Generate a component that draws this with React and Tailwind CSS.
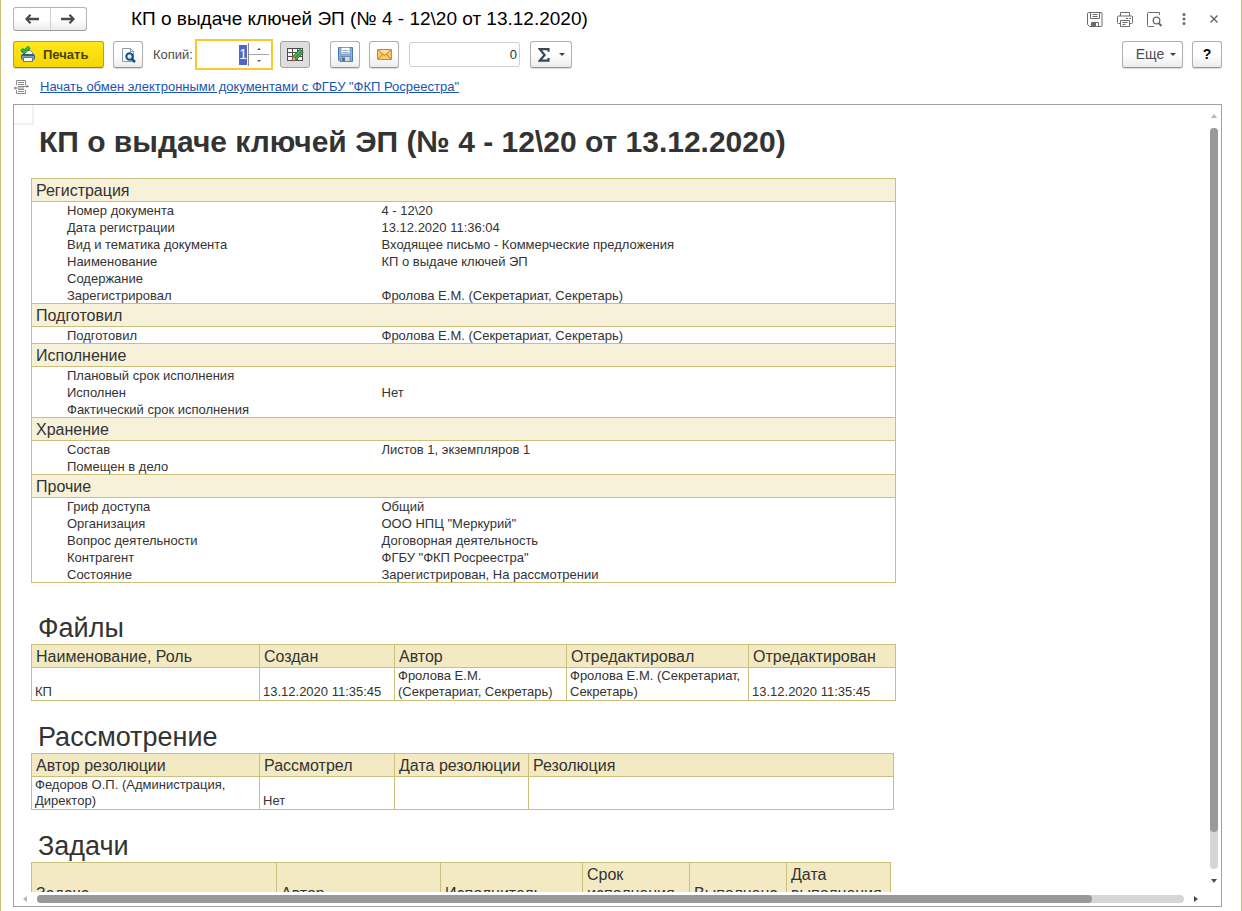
import { useEffect, useRef } from "react";

const details = [
  {
    title: "Регистрация",
    rows: [
      ["Номер документа", "4 - 12\\20"],
      ["Дата регистрации", "13.12.2020 11:36:04"],
      ["Вид и тематика документа", "Входящее письмо - Коммерческие предложения"],
      ["Наименование", "КП о выдаче ключей ЭП"],
      ["Содержание", ""],
      ["Зарегистрировал", "Фролова Е.М. (Секретариат, Секретарь)"],
    ],
  },
  {
    title: "Подготовил",
    rows: [["Подготовил", "Фролова Е.М. (Секретариат, Секретарь)"]],
  },
  {
    title: "Исполнение",
    rows: [
      ["Плановый срок исполнения", ""],
      ["Исполнен", "Нет"],
      ["Фактический срок исполнения", ""],
    ],
  },
  {
    title: "Хранение",
    rows: [
      ["Состав", "Листов 1, экземпляров 1"],
      ["Помещен в дело", ""],
    ],
  },
  {
    title: "Прочие",
    rows: [
      ["Гриф доступа", "Общий"],
      ["Организация", 'ООО НПЦ "Меркурий"'],
      ["Вопрос деятельности", "Договорная деятельность"],
      ["Контрагент", 'ФГБУ "ФКП Росреестра"'],
      ["Состояние", "Зарегистрирован, На рассмотрении"],
    ],
  },
];

const files = {
  title: "Файлы",
  width: "w-[865px]",
  columns: [
    ["Наименование, Роль", "w-[228px]"],
    ["Создан", "w-[135px]"],
    ["Автор", "w-[172px]"],
    ["Отредактировал", "w-[182px]"],
    ["Отредактирован", "w-[147px]"],
  ],
  rows: [
    [
      "КП",
      "13.12.2020 11:35:45",
      "Фролова Е.М. (Секретариат, Секретарь)",
      "Фролова Е.М. (Секретариат, Секретарь)",
      "13.12.2020 11:35:45",
    ],
  ],
};

const review = {
  title: "Рассмотрение",
  width: "w-[863px]",
  columns: [
    ["Автор резолюции", "w-[228px]"],
    ["Рассмотрел", "w-[135px]"],
    ["Дата резолюции", "w-[134px]"],
    ["Резолюция", "w-[365px]"],
  ],
  rows: [["Федоров О.П. (Администрация, Директор)", "Нет", "", ""]],
};

const tasks = {
  title: "Задачи",
  width: "w-[860px]",
  columns: [
    ["Задача", "w-[245px]"],
    ["Автор", "w-[164px]"],
    ["Исполнитель", "w-[142px]"],
    ["Срок исполнения", "w-[107px]"],
    ["Выполнена", "w-[97px]"],
    ["Дата выполнения", "w-[104px]"],
  ],
  rows: [],
};

const buttonBase =
  "flex h-[27px] shrink-0 items-center justify-center rounded-[3px] border border-[#b0b0b0] border-b-[#949494] bg-linear-to-b from-white from-50% to-[#ececec] shadow-[0_1px_1px_rgba(0,0,0,0.15)]";

const ArrowIcon = ({ flip }) => (
  <svg width="14" height="10" viewBox="0 0 14 10" className={flip ? "rotate-180" : ""} aria-hidden>
    <path d="M2 5H14" stroke="#4a4a4a" strokeWidth="2.4" />
    <path d="M5.5 0.8L1.5 5L5.5 9.2" fill="none" stroke="#4a4a4a" strokeWidth="2.2" />
  </svg>
);

const PrinterColorIcon = () => (
  <svg width="16" height="17" viewBox="0 0 16 17" aria-hidden>
    <path d="M4.5 9V4.5H10.5L12.5 6.5V9" fill="#fff" stroke="#7b7f6a" />
    <rect x="1.5" y="8.5" width="13" height="5" rx="1" fill="#7fa3c7" stroke="#3a5a7c" />
    <path d="M2 9.5H14" stroke="#3a5a7c" />
    <rect x="3.5" y="11.5" width="9" height="4" fill="#fff" stroke="#5b7ea3" />
    <path d="M1.5 3.2L4.3 6L9.3 1.2" fill="none" stroke="#157220" strokeWidth="3.6" />
    <path d="M1.5 3.2L4.3 6L9.3 1.2" fill="none" stroke="#2ccb3d" strokeWidth="1.9" />
  </svg>
);

const PreviewIcon = () => (
  <svg width="15" height="16" viewBox="0 0 15 16" aria-hidden>
    <path d="M1.5 14.5V1.5H9.5L12.5 4.5V14.5Z" fill="#fff" stroke="#8a9aa8" />
    <path d="M9.5 1.5V4.5H12.5" fill="none" stroke="#8a9aa8" />
    <circle cx="8.5" cy="9.5" r="3.2" fill="#dbeaf6" stroke="#11507f" strokeWidth="2" />
    <path d="M10.8 12L14 15" stroke="#11507f" strokeWidth="2.4" />
  </svg>
);

const EditTableIcon = () => (
  <svg width="17" height="16" viewBox="0 0 17 16" aria-hidden>
    <rect x="0.5" y="1.5" width="15" height="12" fill="#fff" stroke="#4c4c4c" />
    <path d="M0 5.5H16M0 9.5H16M5.5 1V14M10.5 1V14" stroke="#4c4c4c" />
    <path d="M6 9.2L12.2 2.8Q13 2 14 3L15.6 4.6Q16.4 5.6 15.6 6.4L9.4 12.6Z" fill="#54b35c" stroke="#28652d" />
    <path d="M8 11L14.5 4.6" stroke="#3a8a42" strokeWidth="1.4" />
    <path d="M5 14L6 9.2L9.4 12.6Z" fill="#efae9a" stroke="#a54740" strokeWidth="0.9" />
  </svg>
);

const DisketteIcon = () => (
  <svg width="15" height="15" viewBox="0 0 15 15" aria-hidden>
    <path d="M0.5 0.5H14.5V14.5H2L0.5 13Z" fill="#86b0de" stroke="#4a78ab" />
    <rect x="3" y="0.5" width="9" height="6.5" fill="#fff" stroke="#6f94bd" strokeWidth="0.8" />
    <path d="M4.5 3.5H10.5M4.5 5.5H10.5" stroke="#8fa5bb" />
    <rect x="3" y="9.5" width="9" height="5" fill="#d3dbe2" stroke="#5b7ea5" strokeWidth="0.8" />
    <rect x="4" y="10.5" width="3" height="3.5" fill="#4b6f96" />
  </svg>
);

const EnvelopeIcon = () => (
  <svg width="15" height="11" viewBox="0 0 15 11" aria-hidden>
    <rect x="0.5" y="0.5" width="14" height="10" rx="0.5" fill="#f8c869" stroke="#cc8726" />
    <path d="M2 1.2H13L7.5 5.8Z" fill="#fde0a0" />
    <path d="M1 1L7.5 6.5L14 1M1 10L5.8 5.2M14 10L9.2 5.2" fill="none" stroke="#c07c22" strokeWidth="0.9" />
  </svg>
);

const SigmaIcon = () => (
  <svg width="12" height="14" viewBox="0 0 12 14" aria-hidden>
    <path d="M10.5 3.8V1.2H1.8L6.6 7L1.8 12.6H10.5V10" fill="none" stroke="#34495a" strokeWidth="2.2" />
  </svg>
);

const CaretDown = () => (
  <svg width="6" height="3" viewBox="0 0 6 3" aria-hidden>
    <path d="M0 0H6L3 3Z" fill="#444" />
  </svg>
);

const SaveIcon = () => (
  <svg width="16" height="15" viewBox="0 0 16 15" fill="none" stroke="#6b6b6b" aria-hidden>
    <path d="M0.5 1.5Q0.5 0.5 1.5 0.5H14Q15 0.5 15 1.5V13.5Q15 14.5 14 14.5H2.5L0.5 12.5Z" />
    <path d="M3.5 0.5V6.5H12.5V0.5M5.5 2.5H10.5M5.5 4.5H10.5M4.5 14V10.5H11.5V14" />
    <rect x="5" y="11" width="4" height="3" fill="#6b6b6b" stroke="none" />
  </svg>
);

const PrinterIcon = () => (
  <svg width="16" height="15" viewBox="0 0 16 15" fill="none" stroke="#6b6b6b" aria-hidden>
    <path d="M3.5 4V0.5H12.5V4" />
    <path d="M3.5 11.5H1.5Q0.5 11.5 0.5 10.5V5Q0.5 4 1.5 4H14.5Q15.5 4 15.5 5V10.5Q15.5 11.5 14.5 11.5H12.5" />
    <path d="M3.5 8.5H12.5V14.5H3.5ZM5.5 10.5H10.5M5.5 12.5H8.5M9 6.5H11M12 6.5H14" />
  </svg>
);

const PagePreviewIcon = () => (
  <svg width="15" height="15" viewBox="0 0 15 15" fill="none" stroke="#6b6b6b" aria-hidden>
    <path d="M12.5 3V0.5H1.5Q0.5 0.5 0.5 1.5V13.5Q0.5 14.5 1.5 14.5H7" />
    <circle cx="9.5" cy="8.5" r="3.3" strokeWidth="1.3" />
    <path d="M11.5 11L14.5 14" strokeWidth="2" />
  </svg>
);

const ExchangeIcon = () => (
  <svg width="16" height="15" viewBox="0 0 16 15" fill="none" stroke="#8c8c8c" aria-hidden>
    <path d="M3.5 5V0.5H12.5V5M5 2.5H11M5 4.5H11" />
    <path d="M3.5 10V13.5H12.5V10M5 9.5H11M5 11.5H11" />
    <path d="M16 6.5H5M11 8H1" />
    <path d="M14.5 4.5V8L12 6.5Z M1.5 6.5V10L4 8Z" fill="#8c8c8c" stroke="none" />
  </svg>
);

const ScrollArrow = ({ points, fill }) => (
  <svg width="6" height="6" viewBox="0 0 6 6" className="shrink-0" aria-hidden>
    <polygon points={points} fill={fill} />
  </svg>
);

const TitleBar = () => (
  <header className="flex h-6 items-center">
    <div className="flex h-6 w-[74px] shrink-0 overflow-hidden rounded-[3px] border border-[#b4b4b4] border-b-[#9a9a9a] bg-linear-to-b from-white from-50% to-[#ececec]">
      <button type="button" aria-label="Назад" className="flex flex-1 items-center justify-center border-r border-[#cfcfcf]">
        <ArrowIcon />
      </button>
      <button type="button" aria-label="Вперед" className="flex flex-1 items-center justify-center">
        <ArrowIcon flip />
      </button>
    </div>
    <h1 className="ml-11 flex-1 truncate text-[19px] leading-6 text-black">
      КП о выдаче ключей ЭП (№ 4 - 12\20 от 13.12.2020)
    </h1>
    <div className="flex items-center gap-[14px]">
      <button type="button" aria-label="Сохранить"><SaveIcon /></button>
      <button type="button" aria-label="Печать"><PrinterIcon /></button>
      <button type="button" aria-label="Просмотр"><PagePreviewIcon /></button>
      <button type="button" aria-label="Меню" className="flex w-4 justify-center">
        <svg width="4" height="12" viewBox="0 0 4 12" fill="#6b6b6b" aria-hidden>
          <circle cx="2" cy="1.6" r="1.5" />
          <circle cx="2" cy="6" r="1.5" />
          <circle cx="2" cy="10.4" r="1.5" />
        </svg>
      </button>
      <button type="button" aria-label="Закрыть" className="flex w-4 justify-center">
        <svg width="8" height="8" viewBox="0 0 8 8" stroke="#5c5c5c" strokeWidth="1.2" aria-hidden>
          <path d="M0.5 0.5L7.5 7.5M7.5 0.5L0.5 7.5" />
        </svg>
      </button>
    </div>
  </header>
);

const Toolbar = () => {
  const copiesRef = useRef(null);

  useEffect(() => {
    copiesRef.current.focus();
    copiesRef.current.select();
  }, []);

  return (
    <div className="mt-2 flex h-[31px] items-center">
      <button
        type="button"
        className="flex h-[27px] w-[91px] shrink-0 items-center gap-[7px] rounded-[3px] border border-[#c2a200] border-b-[#9a8000] bg-linear-to-b from-[#ffe81a] to-[#f6d500] pl-[6px] text-[13px] font-bold text-[#4a4000] shadow-[0_1px_1px_rgba(0,0,0,0.15)]"
      >
        <PrinterColorIcon />
        Печать
      </button>
      <button type="button" aria-label="Предварительный просмотр" className={`${buttonBase} ml-[9px] w-[30px]`}>
        <PreviewIcon />
      </button>
      <label htmlFor="copies" className="ml-[10px] w-[42px] text-[13px] text-[#4d4d4d]">
        Копий:
      </label>
      <div className="flex h-[31px] w-[78px] shrink-0 items-center border-2 border-[#f9c82a] bg-white pr-[2px]">
        <input
          id="copies"
          ref={copiesRef}
          type="text"
          inputMode="numeric"
          defaultValue="1"
          className="h-5 min-w-0 flex-1 pr-px text-right text-[14px] text-black outline-none selection:bg-[#5068c4] selection:text-white"
        />
        <div className="flex h-[23px] w-[21px] flex-col border-l border-[#8c8c8c]">
          <button type="button" aria-label="Больше" className="flex flex-1 items-center justify-center border-b border-[#a8a8a8]">
            <svg width="4" height="2" viewBox="0 0 4 2" aria-hidden><path d="M0 2H4L2 0Z" fill="#555" /></svg>
          </button>
          <button type="button" aria-label="Меньше" className="flex flex-1 items-center justify-center">
            <svg width="4" height="2" viewBox="0 0 4 2" aria-hidden><path d="M0 0H4L2 2Z" fill="#555" /></svg>
          </button>
        </div>
      </div>
      <button
        type="button"
        aria-label="Редактирование"
        aria-pressed="true"
        className="ml-[7px] flex h-[27px] w-[30px] shrink-0 items-center justify-center rounded-[3px] border border-[#a3a3a3] bg-[#dedede]"
      >
        <EditTableIcon />
      </button>
      <button type="button" aria-label="Сохранить в файл" className={`${buttonBase} ml-5 w-[30px]`}>
        <DisketteIcon />
      </button>
      <button type="button" aria-label="Отправить" className={`${buttonBase} ml-[9px] w-[30px]`}>
        <EnvelopeIcon />
      </button>
      <input
        type="text"
        aria-label="Сумма"
        readOnly
        value="0"
        className="ml-[10px] h-[25px] w-[111px] shrink-0 rounded-[3px] border border-[#cfcfcf] px-[2px] text-right text-[13px] text-[#333] outline-none"
      />
      <button type="button" aria-label="Итоги" className={`${buttonBase} ml-[10px] w-[42px] gap-[9px]`}>
        <SigmaIcon />
        <CaretDown />
      </button>
      <button type="button" className={`${buttonBase} ml-auto w-[61px] gap-[6px] pl-[7px] text-[14px] text-[#4d4d4d]`}>
        Еще
        <CaretDown />
      </button>
      <button type="button" aria-label="Справка" className={`${buttonBase} ml-[9px] w-[30px] text-[14px] font-bold text-black`}>
        ?
      </button>
    </div>
  );
};

const DetailsTable = () => (
  <table className="w-[865px] table-fixed border-collapse border border-[#cbbf7c] text-left text-[13px] leading-[14px] text-[#333]">
    <colgroup>
      <col className="w-[350px]" />
      <col />
    </colgroup>
    {details.map((section) => (
      <tbody key={section.title}>
        <tr>
          <th
            colSpan={2}
            scope="rowgroup"
            className="h-[23px] border border-[#cbbf7c] bg-[#f7f1da] px-1 pb-0 pt-[2px] text-[16px] font-normal leading-5"
          >
            {section.title}
          </th>
        </tr>
        {section.rows.map(([name, value]) => (
          <tr key={name}>
            <td className="h-[17px] pb-0 pl-[35px] pt-[2px]">{name}</td>
            <td className="h-[17px] px-0 pb-0 pt-[2px]">{value}</td>
          </tr>
        ))}
      </tbody>
    ))}
  </table>
);

const ReportTable = ({ title, width, columns, rows }) => (
  <section>
    <h3 className="pl-[7px] pt-[2px] text-[27px] leading-8 text-[#333]">{title}</h3>
    <table className={`${width} table-fixed border-collapse text-left text-[13px] leading-4 text-[#333]`}>
      <thead>
        <tr>
          {columns.map(([name, columnWidth]) => (
            <th
              key={name}
              scope="col"
              className={`${columnWidth} border border-[#cbbf7c] bg-[#f3eac4] pb-px pl-1 pt-[2px] align-bottom text-[16px] font-normal leading-[19px]`}
            >
              {name}
            </th>
          ))}
        </tr>
      </thead>
      <tbody>
        {rows.map((row, i) => (
          <tr key={i}>
            {row.map((cell, j) => (
              <td key={j} className="h-[33px] border border-[#cbbf7c] py-0 pl-[3px] align-bottom">
                {cell}
              </td>
            ))}
          </tr>
        ))}
      </tbody>
    </table>
  </section>
);

export default function App() {
  return (
    <div className="flex h-screen flex-col border-x border-[#cdbf77] bg-white pb-1 pl-3 pr-[19px] pt-[7px] font-['Liberation_Sans',Arial,sans-serif]">
      <TitleBar />
      <Toolbar />
      <div className="mt-2 flex h-[18px] items-center gap-[11px]">
        <ExchangeIcon />
        <a href="#exchange" className="text-[13px] leading-[18px] text-[#1a55b0] underline">
          Начать обмен электронными документами с ФГБУ "ФКП Росреестра"
        </a>
      </div>

      <main className="mt-2 grid min-h-0 flex-1 grid-cols-[minmax(0,1fr)_14px] grid-rows-[minmax(0,1fr)_14px] border border-[#a0a0a0]">
        <div className="overflow-auto [scrollbar-width:none]">
          <div className="size-5 border-b-2 border-r-2 border-[#f1f1f1]" />
          <article className="pb-6 pl-[17px]">
            <h2 className="mb-5 pl-2 text-[30px] font-bold leading-[33px] text-[#333]">
              КП о выдаче ключей ЭП (№ 4 - 12\20 от 13.12.2020)
            </h2>
            <DetailsTable />
            <div className="mt-[27px] flex flex-col gap-[18px]">
              <ReportTable {...files} />
              <ReportTable {...review} />
              <ReportTable {...tasks} />
            </div>
          </article>
        </div>

        <div className="flex flex-col items-center pb-2 pt-2">
          <ScrollArrow points="0,5 6,5 3,1" fill="#b5b5b5" />
          <div className="my-[9px] w-2 flex-1 rounded-full bg-[#d6d6d6]">
            <div className="h-[95%] rounded-full bg-[#999]" />
          </div>
          <ScrollArrow points="0,1 6,1 3,5" fill="#4d4d4d" />
        </div>

        <div className="col-span-2 flex items-center pl-2 pr-[22px]">
          <ScrollArrow points="5,0 5,6 1,3" fill="#b5b5b5" />
          <div className="mx-[9px] h-2 flex-1 rounded-full bg-[#d6d6d6]">
            <div className="h-full w-[92%] rounded-full bg-[#999]" />
          </div>
          <ScrollArrow points="1,0 1,6 5,3" fill="#4d4d4d" />
        </div>
      </main>
    </div>
  );
}
